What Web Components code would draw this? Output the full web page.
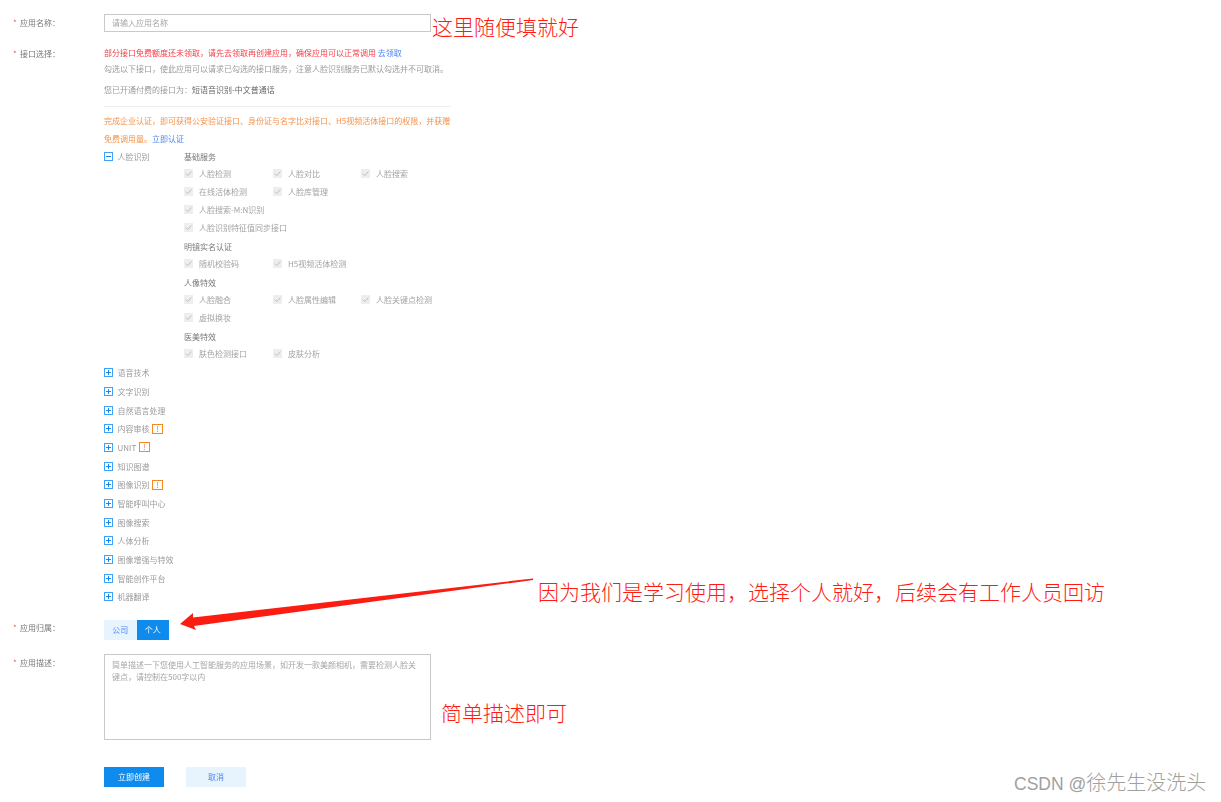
<!DOCTYPE html>
<html lang="zh">
<head>
<meta charset="utf-8">
<title>创建应用</title>
<style>
  html, body { margin: 0; background: #fff; }
  body { font-family: "Noto Sans CJK SC", "Noto Sans", sans-serif; }
</style>
</head>
<body>
<template id="form-row-tpl">
  <style>
    :host { display: flex; align-items: flex-start; }
    .label { width: 104px; flex: none; box-sizing: border-box; padding-left: 13px; font-size: 8px; line-height: 16px; color: #777; white-space: nowrap; }
    .label i { font-style: normal; color: #f0604a; display: inline-block; width: 7px; }
    .body { flex: 1; min-width: 0; }
  </style>
  <div class="label"><i>*</i><span></span></div>
  <div class="body"><slot></slot></div>
</template>

<app-form>
  <form-row label="应用名称：" offset="1"><text-box>请输入应用名称</text-box></form-row>
  <form-row class="gap-a" label="接口选择：" offset="1">
    <api-notice></api-notice>
    <tree-node open label="人脸识别">
      <api-group name="基础服务">
        <check-item>人脸检测</check-item><check-item>人脸对比</check-item><check-item>人脸搜索</check-item>
        <check-item>在线活体检测</check-item><check-item>人脸库管理</check-item>
        <check-item wide>人脸搜索-M:N识别</check-item>
        <check-item wide>人脸识别特征值同步接口</check-item>
      </api-group>
      <api-group name="明镜实名认证">
        <check-item>随机校验码</check-item><check-item>H5视频活体检测</check-item>
      </api-group>
      <api-group name="人像特效">
        <check-item>人脸融合</check-item><check-item>人脸属性编辑</check-item><check-item>人脸关键点检测</check-item>
        <check-item wide>虚拟换妆</check-item>
      </api-group>
      <api-group name="医美特效">
        <check-item>肤色检测接口</check-item><check-item>皮肤分析</check-item>
      </api-group>
    </tree-node>
    <tree-node label="语音技术"></tree-node>
    <tree-node label="文字识别"></tree-node>
    <tree-node label="自然语言处理"></tree-node>
    <tree-node label="内容审核" warn></tree-node>
    <tree-node label="UNIT" warn></tree-node>
    <tree-node label="知识图谱"></tree-node>
    <tree-node label="图像识别" warn></tree-node>
    <tree-node label="智能呼叫中心"></tree-node>
    <tree-node label="图像搜索"></tree-node>
    <tree-node label="人体分析"></tree-node>
    <tree-node label="图像增强与特效"></tree-node>
    <tree-node label="智能创作平台"></tree-node>
    <tree-node label="机器翻译"></tree-node>
  </form-row>
  <form-row class="gap-b" label="应用归属：" offset="0"><seg-switch></seg-switch></form-row>
  <form-row class="gap-c" label="应用描述：" offset="1"><text-box multi>简单描述一下您使用人工智能服务的应用场景，如开发一款美颜相机，需要检测人脸关键点，请控制在500字以内</text-box></form-row>
  <form-actions class="gap-d"></form-actions>
</app-form>
<note-layer></note-layer>

<script>
  const tpl = id => document.getElementById(id).content.cloneNode(true);

  class FormRow extends HTMLElement {
    constructor() {
      super();
      this.attachShadow({mode: 'open'}).appendChild(tpl('form-row-tpl'));
      this.shadowRoot.querySelector('span').textContent = this.getAttribute('label');
      this.shadowRoot.querySelector('.label').style.paddingTop = (this.getAttribute('offset') || 0) + 'px';
    }
  }
  customElements.define('form-row', FormRow);

  class TextBox extends HTMLElement {
    constructor() {
      super();
      this.attachShadow({mode: 'open'}).innerHTML = `
        <style>
          :host { display: block; box-sizing: border-box; width: 327px; border: 1px solid #c9c9c9; background: #fff; }
          :host([multi]) { height: 86px; padding: 4px 7px; }
          :host([multi]) div { line-height: 12px; }
          :host(:not([multi])) { height: 18px; padding: 0 7px; }
          div { font-size: 8px; line-height: 16px; color: #a6a6a6; }
        </style>
        <div><slot></slot></div>`;
    }
  }
  customElements.define('text-box', TextBox);

  class ApiNotice extends HTMLElement {
    constructor() {
      super();
      this.attachShadow({mode: 'open'}).innerHTML = `
        <style>
          :host { display: block; width: 347px; font-size: 8px; white-space: nowrap; }
          p { margin: 0; line-height: 16px; }
          .red { color: #f4404c; }
          .grey { color: #9a9a9a; }
          .paid { margin-top: 4.5px; color: #9a9a9a; }
          .paid b { font-weight: normal; color: #666; }
          hr { border: 0; border-top: 1px solid #eee; margin: 8.5px 0 4.5px; }
          .orange { color: #f5924a; line-height: 18px; }
          a { color: #4d86f0; text-decoration: none; }
        </style>
        <p class="red">部分接口免费额度还未领取，请先去领取再创建应用，确保应用可以正常调用 <a>去领取</a></p>
        <p class="grey">勾选以下接口，使此应用可以请求已勾选的接口服务，注意人脸识别服务已默认勾选并不可取消。</p>
        <p class="paid">您已开通付费的接口为：<b>短语音识别-中文普通话</b></p>
        <hr>
        <p class="orange">完成企业认证，即可获得公安验证接口、身份证与名字比对接口、H5视频活体接口的权限，并获赠</p>
        <p class="orange">免费调用量。<a>立即认证</a></p>`;
    }
  }
  customElements.define('api-notice', ApiNotice);

  class TreeNode extends HTMLElement {
    constructor() {
      super();
      const open = this.hasAttribute('open');
      const warn = this.hasAttribute('warn');
      const bar = open ? '' : '<path d="M4.5 2v5" stroke="#1d86e6" stroke-width="1"/>';
      this.attachShadow({mode: 'open'}).innerHTML = `
        <style>
          :host { display: flex; align-items: flex-start; font-size: 8px; color: #9a9a9a; white-space: nowrap; }
          .head { display: flex; align-items: center; height: 18.67px; flex: none; }
          :host([open]) .head { height: 17px; width: 80px; }
          svg { display: block; margin-right: 4.5px; flex: none; }
          .warn { box-sizing: border-box; width: 11px; height: 10px; margin-left: 2.5px; border: 1px solid #f38a1d; color: #ef6f5a; font-size: 8px; line-height: 8px; text-align: center; }
        </style>
        <div class="head">
          <svg width="9" height="9" viewBox="0 0 9 9"><rect x=".5" y=".5" width="8" height="8" fill="#fff" stroke="#3fa2f6"/><path d="M2 4.5h5" stroke="#1d86e6" stroke-width="1"/>${bar}</svg>
          <span>${this.getAttribute('label')}</span>
          ${warn ? '<span class="warn">!</span>' : ''}
        </div>
        <div><slot></slot></div>`;
    }
  }
  customElements.define('tree-node', TreeNode);

  class ApiGroup extends HTMLElement {
    constructor() {
      super();
      this.attachShadow({mode: 'open'}).innerHTML = `
        <style>
          :host { display: block; margin-bottom: 1px; }
          h4 { margin: 0; height: 17px; line-height: 17px; font-size: 8px; font-weight: normal; color: #777; }
          div { display: grid; grid-template-columns: 89px 88px auto; grid-auto-rows: 18px; }
        </style>
        <h4>${this.getAttribute('name')}</h4>
        <div><slot></slot></div>`;
    }
  }
  customElements.define('api-group', ApiGroup);

  class CheckItem extends HTMLElement {
    constructor() {
      super();
      this.attachShadow({mode: 'open'}).innerHTML = `
        <style>
          :host { display: flex; align-items: center; font-size: 8px; color: #a3a3a3; white-space: nowrap; }
          :host([wide]) { grid-column: 1 / -1; }
          svg { display: block; margin-right: 6px; flex: none; }
        </style>
        <svg width="9" height="9" viewBox="0 0 9 9"><rect width="9" height="9" fill="#eeeeee"/><path d="M1.8 4.6l2 2 3.6-4" fill="none" stroke="#bdbdbd" stroke-width="1"/></svg>
        <slot></slot>`;
    }
  }
  customElements.define('check-item', CheckItem);

  class SegSwitch extends HTMLElement {
    constructor() {
      super();
      this.attachShadow({mode: 'open'}).innerHTML = `
        <style>
          :host { display: flex; height: 20px; font-size: 8px; line-height: 20px; text-align: center; }
          span { width: 32.5px; background: #e8f4fd; color: #4d86f0; }
          .on { background: #0f8bee; color: #fff; }
        </style>
        <span>公司</span><span class="on">个人</span>`;
    }
  }
  customElements.define('seg-switch', SegSwitch);

  class FormActions extends HTMLElement {
    constructor() {
      super();
      this.attachShadow({mode: 'open'}).innerHTML = `
        <style>
          :host { display: flex; gap: 22px; padding-left: 104px; font-size: 8px; line-height: 20px; text-align: center; }
          span { width: 60px; height: 20px; background: #e8f4fd; color: #4d86f0; }
          .main { background: #0f8bee; color: #fff; }
        </style>
        <span class="main">立即创建</span><span>取消</span>`;
    }
  }
  customElements.define('form-actions', FormActions);

  class AppForm extends HTMLElement {
    constructor() {
      super();
      this.attachShadow({mode: 'open'}).innerHTML = `
        <style>
          :host { display: block; padding-top: 14px; filter: blur(.45px); }
          ::slotted(.gap-a) { margin-top: 13px; }
          ::slotted(.gap-b) { margin-top: 13.6px; }
          ::slotted(.gap-c) { margin-top: 14px; }
          ::slotted(.gap-d) { margin-top: 27px; }
        </style>
        <slot></slot>`;
    }
  }
  customElements.define('app-form', AppForm);

  // red notes and the arrow drawn over the screenshot
  class NoteLayer extends HTMLElement {
    constructor() {
      super();
      this.attachShadow({mode: 'open'}).innerHTML = `
        <style>
          :host { position: absolute; left: 0; top: 0; width: 1221px; height: 802px; pointer-events: none; overflow: hidden; }
          span { position: absolute; font-size: 21px; font-weight: 300; line-height: 30px; color: #ff1a12; white-space: nowrap; }
          .mark { font-size: 20px; font-weight: 300; color: #a0a0a0; }
          .mark b { font-weight: 400; font-size: 17.5px; font-family: "Liberation Sans", sans-serif; }
          svg { position: absolute; left: 0; top: 0; }
        </style>
        <span style="left:432px;top:11px">这里随便填就好</span>
        <span style="left:538px;top:576px">因为我们是学习使用，选择个人就好，后续会有工作人员回访</span>
        <span style="left:441px;top:697px">简单描述即可</span>
        <span class="mark" style="left:1014px;top:767px"><b>CSDN @</b>徐先生没洗头</span>
        <svg width="1221" height="802"><polygon points="180,624 193,613 193,617.5 533,578.5 533,580 194,626 196,630" fill="#fb1c12"/></svg>`;
    }
  }
  customElements.define('note-layer', NoteLayer);
</script>
</body>
</html>
